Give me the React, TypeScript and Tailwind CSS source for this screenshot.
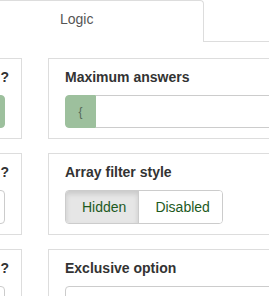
import React from "react";

function LeftCard({ title, children }: { title: string; children: React.ReactNode }) {
  return (
    <div className="ml-[-200px] w-[222px] shrink-0 border border-[#dddddd] bg-white px-4 pt-2 pb-[10px]">
      <div className="text-right whitespace-nowrap text-[14px] leading-[20px] font-bold text-[#333333] mb-2 mr-[-4px]">{title}</div>
      {children}
    </div>
  );
}

function RightCard({ title, children }: { title: string; children: React.ReactNode }) {
  return (
    <div className="w-[260px] shrink-0 border border-[#dddddd] bg-white px-4 pt-2 pb-[10px]">
      <div className="whitespace-nowrap text-[14px] leading-[20px] font-bold text-[#333333] mb-2">{title}</div>
      {children}
    </div>
  );
}

export default function App() {
  return (
    <div className="w-[269px] h-[296px] overflow-hidden bg-white font-['Liberation_Sans',Arial,sans-serif]">
      <div className="flex h-[42px]">
        <div className="ml-[-60px] w-[264px] shrink-0 border-t border-l border-r border-[#dddddd] rounded-t-[4px] pl-[119px] pt-2 text-[14px] leading-[20px] text-[#555555]">
          Logic
        </div>
        <div className="flex-1 border-b border-[#dddddd]" />
      </div>
      <div className="mt-4 flex flex-col gap-[14px]">
        <div className="flex gap-[26px]">
          <LeftCard title="?">
            <div className="h-[33px] rounded-[4px] border border-[#9dc09d] bg-[#9dc09d]" />
          </LeftCard>
          <RightCard title="Maximum answers">
            <div className="flex h-[33px]">
              <div className="w-[31px] shrink-0 rounded-l-[4px] border border-[#9dc09d] bg-[#9dc09d] flex items-center justify-center text-[12px] text-[#56685a]">
                {"{"}
              </div>
              <div className="flex-1 border-t border-b border-r border-[#cccccc] rounded-r-[4px] bg-white" />
            </div>
          </RightCard>
        </div>
        <div className="flex gap-[26px]">
          <LeftCard title="?">
            <div className="h-[34px] rounded-[4px] border border-[#cccccc] bg-white" />
          </LeftCard>
          <RightCard title="Array filter style">
            <div className="flex">
              <div className="flex h-[34px] rounded-[4px] border border-[#cccccc] overflow-hidden text-[14px] text-[#1e5a1e]">
                <div className="flex items-center pl-4 pr-3 bg-[#e6e6e6] shadow-[inset_0_3px_5px_rgba(0,0,0,0.125)] border-r border-[#cccccc]">
                  Hidden
                </div>
                <div className="flex items-center pl-4 pr-3 bg-white">Disabled</div>
              </div>
            </div>
          </RightCard>
        </div>
        <div className="flex gap-[26px]">
          <LeftCard title="?">
            <div className="h-[34px] rounded-[4px] border border-[#cccccc] bg-white" />
          </LeftCard>
          <RightCard title="Exclusive option">
            <div className="h-[34px] rounded-[4px] border border-[#cccccc] bg-white" />
          </RightCard>
        </div>
      </div>
    </div>
  );
}
